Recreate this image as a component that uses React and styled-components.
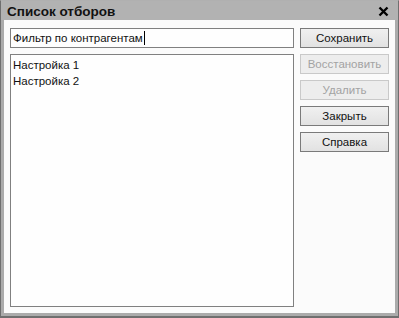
import React from "react";
import styled, { createGlobalStyle } from "styled-components";

const Global = createGlobalStyle`
  html, body { margin: 0; padding: 0; background: #ffffff; }
  body { font-family: "Liberation Sans", Arial, sans-serif; }
  * { box-sizing: border-box; }
`;

const Window = styled.div`
  width: 399px;
  height: 318px;
  background: #ababab;
  border: 1px solid #6f6f6f;
  border-top-color: #b0b0b0;
  border-bottom-width: 2px;
  display: flex;
  flex-direction: column;
  padding: 0 3px 3px 3px;
`;

const TitleBar = styled.div`
  height: 19px;
  display: flex;
  align-items: center;
  justify-content: space-between;
  background: #b2b2b2;
  margin: 0 -3px;
  padding: 1px 9px 0 6px;
`;

const Title = styled.div`
  font: bold 13.5px "Liberation Sans", Arial, sans-serif;
  color: #111;
`;

const Close = styled.svg`
  width: 11px;
  height: 11px;
`;

const Panel = styled.div`
  flex: 1;
  background: #fbfbfb;
  display: grid;
  grid-template-columns: 284px 89px;
  grid-template-rows: 20px 1fr;
  column-gap: 6px;
  row-gap: 6px;
  padding: 8px 6px 6px 6px;
  font-size: 11.5px;
`;

const Input = styled.div`
  height: 20px;
  border: 1px solid #808080;
  background: #fefefe;
  color: #111;
  display: flex;
  align-items: center;
  padding-left: 2px;
`;

const Caret = styled.span`
  display: inline-block;
  width: 1px;
  height: 14px;
  background: #000;
  margin-left: 1px;
`;

const List = styled.div`
  border: 1px solid #808080;
  background: #fefefe;
  padding: 2px 2px;
  color: #111;
`;

const Item = styled.div`
  height: 16px;
  line-height: 16px;
`;

const ButtonCol = styled.div`
  display: flex;
  flex-direction: column;
  gap: 6px;
`;

const Button = styled.div`
  height: 20px;
  border: 1px solid ${(p) => (p.$disabled ? "#c9c9c9" : "#7a7a7a")};
  background: ${(p) =>
    p.$disabled ? "#ededed" : "linear-gradient(#f0f0f0, #e2e2e2)"};
  color: ${(p) => (p.$disabled ? "#a3a3a3" : "#111")};
  display: flex;
  align-items: center;
  justify-content: center;
`;

export default function App() {
  return (
    <>
      <Global />
      <Window>
        <TitleBar>
          <Title>Список отборов</Title>
          <Close viewBox="0 0 11 11">
            <path d="M1.5 1.5 L9.5 9.5 M9.5 1.5 L1.5 9.5" stroke="#000" strokeWidth="2.4" />
          </Close>
        </TitleBar>
        <Panel>
          <Input>
            Фильтр по контрагентам
            <Caret />
          </Input>
          <Button>Сохранить</Button>
          <List>
            <Item>Настройка 1</Item>
            <Item>Настройка 2</Item>
          </List>
          <ButtonCol>
            <Button $disabled>Восстановить</Button>
            <Button $disabled>Удалить</Button>
            <Button>Закрыть</Button>
            <Button>Справка</Button>
          </ButtonCol>
        </Panel>
      </Window>
    </>
  );
}
